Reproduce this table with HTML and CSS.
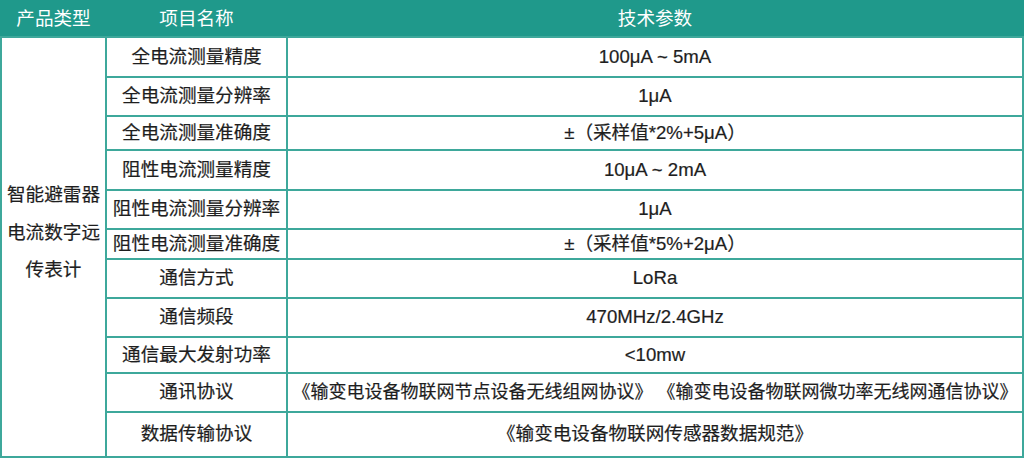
FILE: index.html
```html
<!DOCTYPE html>
<html lang="zh">
<head>
<meta charset="utf-8">
<title>技术参数</title>
<link rel="stylesheet" href="styles.css">
</head>
<body>
<table class="spec">
  <thead>
    <tr class="head">
      <th class="c1">产品类型</th>
      <th class="c2">项目名称</th>
      <th class="c3">技术参数</th>
    </tr>
  </thead>
  <tbody>
    <tr class="h40">
      <td class="type" rowspan="11"><div class="type-text">智能避雷器<br>电流数字远<br>传表计</div></td>
      <td>全电流测量精度</td>
      <td>100μA ~ 5mA</td>
    </tr>
    <tr class="h39"><td>全电流测量分辨率</td><td>1μA</td></tr>
    <tr class="h34"><td>全电流测量准确度</td><td>±（采样值*2%+5μA）</td></tr>
    <tr class="h40"><td>阻性电流测量精度</td><td>10μA ~ 2mA</td></tr>
    <tr class="h39"><td>阻性电流测量分辨率</td><td>1μA</td></tr>
    <tr class="h30"><td>阻性电流测量准确度</td><td>±（采样值*5%+2μA）</td></tr>
    <tr class="h39"><td>通信方式</td><td>LoRa</td></tr>
    <tr class="h39"><td>通信频段</td><td>470MHz/2.4GHz</td></tr>
    <tr class="h36"><td>通信最大发射功率</td><td>&lt;10mw</td></tr>
    <tr class="h39"><td>通讯协议</td><td class="long">《输变电设备物联网节点设备无线组网协议》 《输变电设备物联网微功率无线网通信协议》</td></tr>
    <tr class="h45"><td>数据传输协议</td><td>《输变电设备物联网传感器数据规范》</td></tr>
  </tbody>
</table>
</body>
</html>
```
FILE: styles.css
```css
html, body {
  margin: 0;
  padding: 0;
  background: #ffffff;
}
body {
  width: 1024px;
  height: 458px;
  overflow: hidden;
  font-family: "Liberation Sans", "Noto Sans CJK SC", sans-serif;
  color: #1e1e1e;
}
.spec {
  width: 1024px;
  border-collapse: collapse;
  table-layout: fixed;
  font-size: 18.6px;
}
.spec th,
.spec td {
  border: 2px solid #3ea89b;
  padding: 0;
  text-align: center;
  vertical-align: middle;
  white-space: nowrap;
  line-height: 1.2;
}
.spec td {
  -webkit-text-stroke: 0.2px #1e1e1e;
}
.spec thead th {
  background: #1f998b;
  color: #ffffff;
  font-weight: normal;
  height: 34px;
  border-color: #1f998b #1f998b #3ea89b #1f998b;
}
.c1 { width: 103px; }
.c2 { width: 179px; }
.c3 { width: auto; }
.h30 td { height: 28px; }
.h34 td { height: 32px; }
.h36 td { height: 34px; }
.h39 td { height: 37px; }
.h40 td { height: 38px; }
.h45 td { height: 43px; }
.spec td.long {
  font-size: 18px;
}
.type {
  vertical-align: middle;
}
.type-text {
  line-height: 37.5px;
  padding-bottom: 29px;
}
```
